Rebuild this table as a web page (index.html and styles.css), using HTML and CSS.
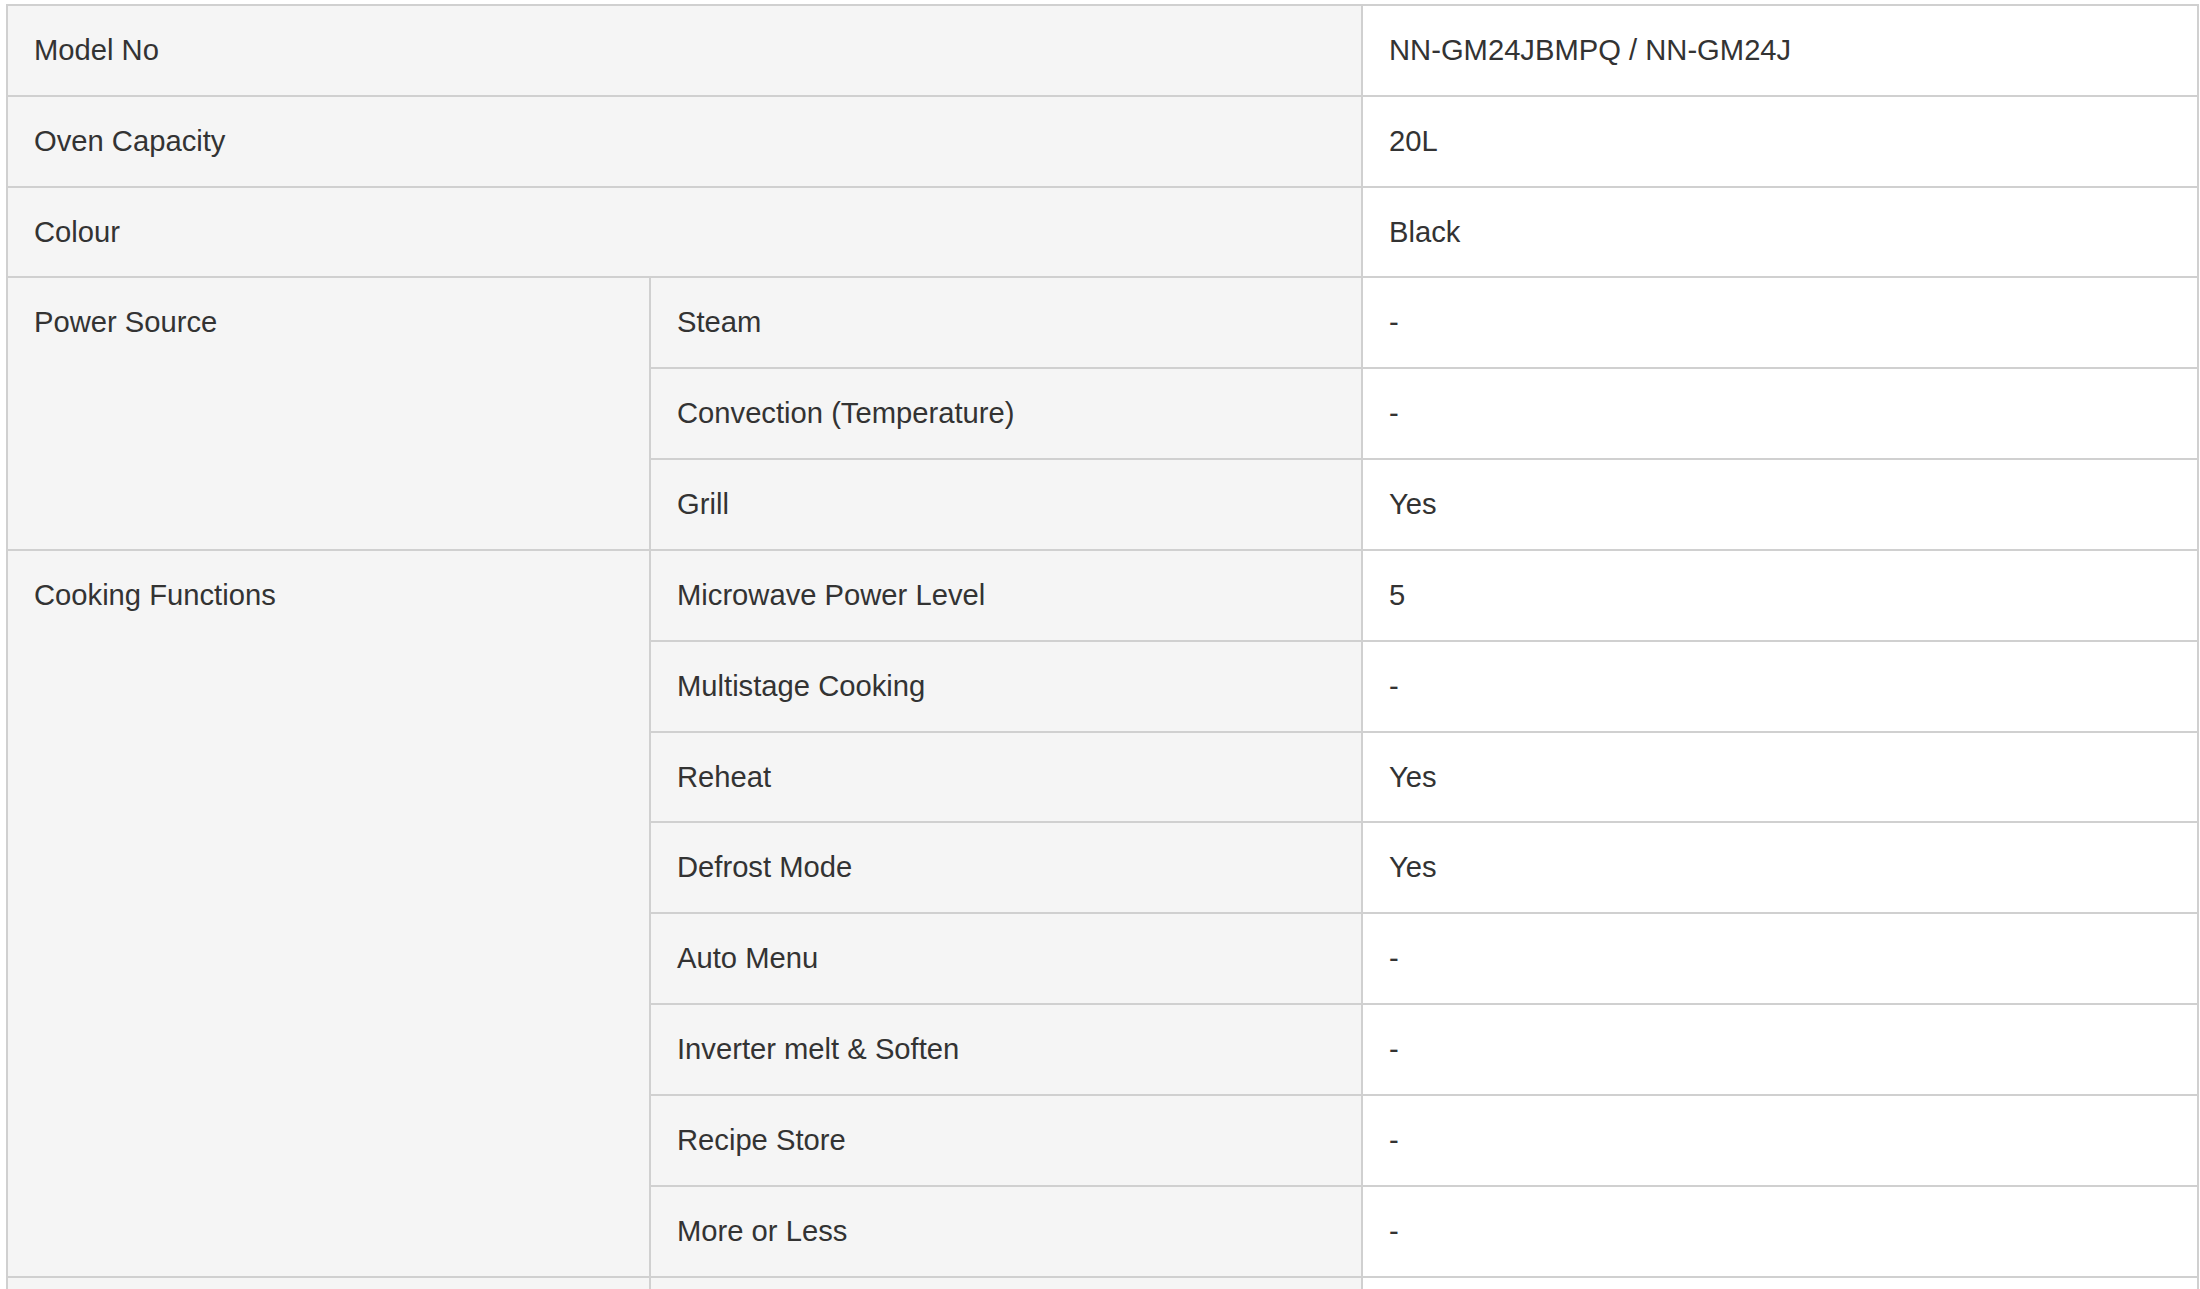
FILE: index.html
```html
<!DOCTYPE html>
<html lang="en">
<head>
<meta charset="utf-8">
<title>Specifications</title>
<link rel="stylesheet" href="styles.css">
</head>
<body>
<table class="spec">
  <colgroup>
    <col class="c-group">
    <col class="c-item">
    <col class="c-value">
  </colgroup>
  <tbody>
    <tr><th class="label" colspan="2">Model No</th><td class="value">NN-GM24JBMPQ / NN-GM24J</td></tr>
    <tr><th class="label" colspan="2">Oven Capacity</th><td class="value">20L</td></tr>
    <tr><th class="label" colspan="2">Colour</th><td class="value">Black</td></tr>
    <tr><th class="label" rowspan="3">Power Source</th><th class="label">Steam</th><td class="value">-</td></tr>
    <tr><th class="label">Convection (Temperature)</th><td class="value">-</td></tr>
    <tr><th class="label">Grill</th><td class="value">Yes</td></tr>
    <tr><th class="label" rowspan="8">Cooking Functions</th><th class="label">Microwave Power Level</th><td class="value">5</td></tr>
    <tr><th class="label">Multistage Cooking</th><td class="value">-</td></tr>
    <tr><th class="label">Reheat</th><td class="value">Yes</td></tr>
    <tr><th class="label">Defrost Mode</th><td class="value">Yes</td></tr>
    <tr><th class="label">Auto Menu</th><td class="value">-</td></tr>
    <tr><th class="label">Inverter melt &amp; Soften</th><td class="value">-</td></tr>
    <tr><th class="label">Recipe Store</th><td class="value">-</td></tr>
    <tr><th class="label">More or Less</th><td class="value">-</td></tr>
    <tr class="spacer"><th class="label"></th><th class="label"></th><td class="value"></td></tr>
  </tbody>
</table>
</body>
</html>
```
FILE: styles.css
```css
html, body {
  margin: 0;
  background: #ffffff;
}
body {
  padding: 4px 0 0 6px;
  font-family: "Liberation Sans", Arial, sans-serif;
  color: #333333;
}
.spec {
  border-collapse: collapse;
  table-layout: fixed;
  width: 2191px;
  font-size: 29.2px;
}
.c-group { width: 643px; }
.c-item { width: 712px; }
.c-value { width: 836px; }
.spec th,
.spec td {
  border: 2px solid #d0d0d0;
  padding: 23px 25px 23px 26px;
  line-height: 42.83px;
  text-align: left;
  vertical-align: top;
  font-weight: normal;
  white-space: nowrap;
}
.spacer th,
.spacer td {
  height: 42.83px;
}
.label {
  background: #f5f5f5;
}
.value {
  background: #ffffff;
}
```
